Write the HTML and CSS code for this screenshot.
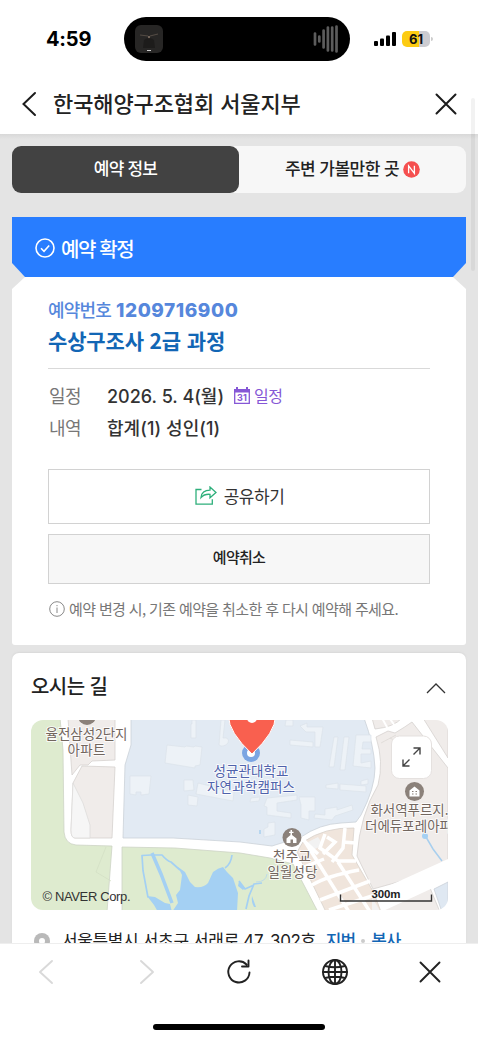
FILE: index.html
```html
<!DOCTYPE html>
<html lang="ko">
<head>
<meta charset="utf-8">
<meta name="viewport" content="width=device-width, initial-scale=1">
<title>예약 정보</title>
<link rel="stylesheet" href="styles.css">
</head>
<body>
<div class="phone">
  <div class="status">
    <span class="clock">4:59</span>
    <div class="island">
      <svg class="art" viewBox="0 0 28 28"><rect width="28" height="28" rx="6" fill="#272625"/><path d="M5 10l8 1M15 11l8-2" stroke="#534b44" stroke-width="1.2"/><path d="M14 11v4" stroke="#8c7a6b" stroke-width="1.5"/><path d="M9 15q5-4 10 0l1 8H8z" fill="#1d1c1b"/><path d="M12 25.500h4" stroke="#ccc" stroke-width="1"/></svg>
      <svg class="wave" viewBox="0 0 26 28"><path d="M2 8.500v11M6.300 11.500v5M10.600 5.500v17M14.900 2.500v23M19.200 2.500v23M23.500 1.500v25" stroke="#5c5c5c" stroke-width="2.700" stroke-linecap="round"/></svg>
    </div>
    <div class="signals">
      <svg class="cell" viewBox="0 0 22 14"><rect x="0" y="9" width="4" height="5" rx="1"/><rect x="6" y="6.500" width="4" height="7.500" rx="1"/><rect x="12" y="3.500" width="4" height="10.500" rx="1"/><rect x="18" y="0" width="4" height="14" rx="1"/></svg>
      <div class="battery">61</div><i class="battery-tip"></i>
    </div>
  </div>

  <header class="header">
    <svg class="back" viewBox="0 0 16 26"><path d="M14 2L2.500 13 14 24"/></svg>
    <h1 class="title">한국해양구조협회 서울지부</h1>
    <svg class="close" viewBox="0 0 22 22"><path d="M1.500 1.500l19 19M20.500 1.500l-19 19"/></svg>
  </header>

  <main class="content">
    <nav class="tabs">
      <div class="tab tab-on">예약 정보</div>
      <div class="tab"><span>주변 가볼만한 곳</span><svg class="new" viewBox="0 0 17 17"><circle cx="8.500" cy="8.500" r="8.300" fill="#f54f4f"/><path d="M5.600 12.300V4.800l5.800 7.500V4.800" fill="none" stroke="#fff" stroke-width="1.300"/></svg></div>
    </nav>

    <section class="banner">
      <svg class="check" viewBox="0 0 20 20"><circle cx="10" cy="10" r="9"/><path d="M6 10.300l3 3 5.200-5.800"/></svg>
      <span>예약 확정</span>
    </section>

    <section class="booking">
      <p class="number"><span>예약번호</span><b>1209716900</b></p>
      <h2 class="course">수상구조사 2급 과정</h2>
      <dl class="facts">
        <dt>일정</dt>
        <dd><span class="date">2026. 5. 4(월)</span><a class="calendar"><svg viewBox="0 0 16 17"><path d="M.7 3.500h14.600v12.800H.7z" fill="none" stroke="#8557d6" stroke-width="1.300"/><path d="M0 2h2V0h2v2h8V0h2v2h2v3.500H0z" fill="#8557d6"/><text x="3" y="13.600" textLength="10">31</text></svg>일정</a></dd>
        <dt>내역</dt>
        <dd><span class="people">합계(1) 성인(1)</span></dd>
      </dl>
      <div class="button share"><svg viewBox="0 0 22 19"><path d="M6.500 3.500H1v14.700h16.300v-5"/><path d="M6 11.500C6.500 6.500 10 4.200 15 4.200V1l6 5.500-6 5.300V8.300c-4-.3-6.700.6-9 3.200z"/></svg><span>공유하기</span></div>
      <div class="button cancel"><span>예약취소</span></div>
      <p class="notice"><svg viewBox="0 0 16 16"><circle cx="8" cy="8" r="7.300"/><path d="M8 6.500v5.500M8 4v1.200"/></svg><span>예약 변경 시, 기존 예약을 취소한 후 다시 예약해 주세요.</span></p>
    </section>

    <section class="directions">
      <div class="directions-head"><h2>오시는 길</h2><svg viewBox="0 0 20 12"><path d="M1 11l9-9 9 9"/></svg></div>
      <div class="map">
        <svg class="map-canvas" viewBox="31 720 417 190">
          <rect x="31" y="720" width="417" height="190" fill="#fff"/>
          <!-- parks -->
          <g fill="#deebcf" stroke="#cdd3c5" stroke-width=".8">
            <path d="M30 718H60L63 750 64 832Q65 844 76 845L112 846 107 912H30z"/>
            <path d="M122 847L175 848 240 853 270 858 293 864 318 912H122z"/>
          </g>
          <path d="M106 847l-10 25 15 9" fill="none" stroke="#d3e0c5" stroke-width=".8"/>
          <!-- housing blocks -->
          <g fill="#f0ecea" stroke="#d6d2cf" stroke-width=".8">
            <path d="M68 718H115V760L92 761 88 765H80L72 775z"/>
            <path d="M73 783L82 766 115 767 112 838H75Q71 838 71 830z"/>
            <path d="M376 737L388 731 395 733Q405 727 412 722L448 768V868L373 889 357 856Q360 815 378 785 384 762 376 737z"/>
            <path d="M372 718h30q-8 9-27 11zM423 718h25v40z"/>
            <path d="M378 912L430 888 440 912z"/>
          </g>
          <path d="M73 783l10 20 7 22v13H75q-4 0-4-8z" fill="#f6f6f6" stroke="#dddcda" stroke-width=".8"/>
          <path d="M373 893L450 858V880L381 912z" fill="#fff"/>
          <path d="M434 889l14-7v30h-6z" fill="#dfe8f2" stroke="#cbd1d8" stroke-width=".8"/>
          <!-- campus -->
          <path d="M131 715V745L125 765 123 838 173 838 240 842 272 846 301 837Q320 824 341 823L356 822 361 815Q375 788 375 768 374 745 364 718z" fill="#e2eaf3" stroke="#ccd2d8" stroke-width=".8"/>
          <g fill="#edf2f7" stroke="#dbe2e9" stroke-width=".7">
            <path d="M167 745l18 2 1-1 8 1 1-1 7 1-2 18-5 1v2l-30-5zM130 776h21l-2 18-8 1v-3h-5v3l-6-1zM192 720h4v18h-5v-14h1zM221 720h4l-2 18q7-1 5 5-5 5-9 2zM184 780h9l1 10-10 1zM198 783l36 9-1 9-37-7zM188 795l10 2-1 9-9-1z"/>
            <path d="M286 720h7v6h-8zM300 726l7-3v4h16l-3 20h-5v-15h-9zM290 740l23 2v5l-23-2zM334 737h4l-4 30h-5zM344 737h5l-4 33h-5zM356 735h15v7h-8l-1 7h9v5h-10v9l10-2v7l-18-2zM326 785l12-2v6l-12-1zM340 784l26 2v6l-26-2zM361 781l7-2v5l-7 1z"/>
            <path d="M267 798l30-3v5l-20 3v8l14 2v5l-24-3v-8l-3-1zM299 797h16v14h-6v9l-8-2v-13zM325 809l12-2v3l15-5 1 5-18 6-3 4-18-2 1-4 10 1zM251 798l9-1-1 4-9 1zM268 823l7-1v13l-11 2v-8l4-2z"/>
          </g>
          <!-- house blocks -->
          <path d="M303 842Q325 827 354 828L352 855 374 893 381 912H326L297 852z" fill="#f0e5dc" stroke="#d8d2cc" stroke-width=".8"/>
          <path d="M308 842l10-5 5 8-10 5zM372 897l8 14h-8z" fill="#f2f2f2"/>
          <g fill="none" stroke="#fff" stroke-width="3.500">
            <path d="M304 840l47 75M318 854l-18-17M345 828l-2 20-11 14M342 842l14 1M325 834l-5 14 18 13h18M304 867l20-8M312 885q15-9 47-15M320 900l50-19M329 910l46-15M338 862l36 56M327 837l8 5-12 12"/>
          </g>
          <path d="M396 735l-15 8M390 738q6 3 11 6" fill="none" stroke="#ddd9d6" stroke-width=".8"/>
          <path d="M382 718l6 11M388 716l7 10" fill="none" stroke="#fff" stroke-width="2"/>
          <!-- lake and streams -->
          <path d="M178 867L185 872 190 882 195 887Q204 888 208 883L213 872Q218 868 223 867L227 872 233 878 238 893 237 912H158L154 905 147 896 155 897 165 903 170 904 172 912 178 903 176 895 180 890 182 875z" fill="#a4d0f3"/>
          <path d="M151 855l-9 .500 1 15 5 27M151 855l11 0q5 6 9 7l9 8M225 868q6-4 7-13" fill="none" stroke="#a4d0f3" stroke-width="1.700" stroke-linejoin="round"/>
          <path d="M152 853l9 21 11 29" fill="none" stroke="#a4d0f3" stroke-width="3.500"/>
          <path d="M262 883l-8 1-5 12-3 13M239 881l6 8 9-4" fill="none" stroke="#a4d0f3" stroke-width="1.700"/><path d="M239 881l6 7-2 2-5-4zM252 896l4 11h-2q-3-5-2-11z" fill="#a4d0f3"/>
          <path d="M256 882q10 0 11-8" fill="none" stroke="#bddbe8" stroke-width="1"/>
          <circle cx="425" cy="836" r="3" fill="#a4d0f3"/><path d="M426 837l7 12 9 12M260 830v4" fill="none" stroke="#a8cfee" stroke-width="1.500"/>
          <!-- labels and pins -->
          <g class="label brown">
            <circle cx="87" cy="716" r="9" fill="#8b817a"/>
            <text x="45.500" y="738.500" textLength="82">율전삼성2단지</text><text x="67.500" y="754.500" textLength="38">아파트</text>
            <text x="273" y="860.500" textLength="38">천주교</text><text x="267.500" y="876.500" textLength="50">일월성당</text>
            <text x="370.500" y="815" textLength="78">화서역푸르지.</text><text x="365" y="830.500" textLength="87">더에듀포레아파</text>
          </g>
          <circle cx="251" cy="753" r="9" fill="#7ba5e2"/><circle cx="251" cy="753" r="4" fill="#fff"/>
          <path d="M228.500 716q0 16 23.500 38 23.500-22 23.500-38z" fill="#f9604f" stroke="#fff" stroke-width="1"/><circle cx="252" cy="718" r="5" fill="#fff"/>
          <g class="label blue"><text x="213.500" y="775.500" textLength="75">성균관대학교</text><text x="207" y="791.500" textLength="88">자연과학캠퍼스</text></g>
          <circle cx="292" cy="837.500" r="9.500" fill="#8b817a"/><path d="M286.500 843v-4.500l4-3.500v-2h-1.500v-1.200h1.500V830h1.500v1.800h1.500v1.200h-1.500v2l4.500 3.500v4.500h-3.500v-3.500h-2.500v3.500z" fill="#fff"/>
          <circle cx="414.500" cy="791.500" r="9.500" fill="#8b817a"/><path d="M409.500 796.500v-6l5-4 5 4v6z" fill="#fff"/><path d="M412 791.500h1.500M415.500 791.500h1.500M412 794h1.500M415.500 794h1.500" stroke="#8b817a" stroke-width="1.200"/>
          <rect x="391.500" y="736" width="40" height="42.500" rx="8" fill="#fff" stroke="#e5e1df"/>
          <path d="M413.500 754.500l6.500-6.500M413.500 748h6.500v6.500M409.500 759.500l-6.500 6.500M403 759.500v6.500h6.500" fill="none" stroke="#444" stroke-width="1.400"/>
          <text class="copyright" x="42.500" y="901" textLength="88">© NAVER Corp.</text>
          <text class="scale" x="371.500" y="897.500" textLength="29">300m</text>
          <path d="M340.500 894.500v6.500h91v-6.500" fill="none" stroke="#333" stroke-width="1.400"/>
        </svg>
      </div>
      <div class="address"><svg viewBox="0 0 16 20"><path d="M8 0a8 8 0 0 1 8 8q0 6-8 12-8-6-8-12a8 8 0 0 1 8-8z" fill="#b9b9b9"/><circle cx="8" cy="8" r="3" fill="#fff"/></svg><span class="street">서울특별시 서초구 서래로 47, 302호</span><a class="lot">지번</a><i></i><a class="copy">복사</a></div>
    </section>
  </main>

  <footer class="toolbar">
    <div class="tools">
      <svg class="tool off" viewBox="0 0 28 28"><path d="M20 3L8 14l12 11"/></svg>
      <svg class="tool off" viewBox="0 0 28 28"><path d="M8 3l12 11L8 25"/></svg>
      <svg class="tool" viewBox="0 0 28 28"><path d="M24.500 14.500A10.600 10.600 0 1 1 21.500 6.500M23.500 2.500V8.500h-6.500"/></svg>
      <svg class="tool" viewBox="0 0 28 28"><circle cx="14" cy="14" r="12"/><ellipse cx="14" cy="14" rx="6.500" ry="12"/><path d="M14 2v24M2 14h24M4 8q10 2.500 20 0M4 20q10-2.500 20 0"/></svg>
      <svg class="tool" viewBox="0 0 28 28"><path d="M4.500 4.500l19 19M23.500 4.500l-19 19"/></svg>
    </div>
    <div class="home"></div>
  </footer>
  <div class="scrollbar"></div>
</div>
</body>
</html>
```
FILE: styles.css
```css
* { box-sizing: border-box; }
body { margin: 0; font-family: "Noto Sans CJK KR", sans-serif; color: #222; }
h1, h2, p, dl, dd { margin: 0; }
svg { display: block; flex: none; }
.phone { position: relative; display: flex; flex-direction: column; width: 478px; height: 1040px; overflow: hidden; background: #fff; white-space: nowrap; }

.status { flex: none; display: flex; align-items: center; height: 77px; padding-left: 46px; }
.clock { width: 78px; font: 700 20px/24px Inter, sans-serif; letter-spacing: -.2px; color: #000; }
.island { display: flex; align-items: center; justify-content: space-between; width: 226px; height: 44px; padding: 0 11px; border-radius: 23px; background: #000; }
.art { width: 28px; height: 28px; }
.wave { width: 26px; height: 28px; }
.signals { display: flex; align-items: center; margin-left: 24px; }
.cell { width: 22px; height: 14px; }
.battery { width: 28px; height: 16px; margin-left: 6px; border-radius: 5px; background: linear-gradient(90deg, #fccb13 62%, #ccccd1 62%); font: 700 13px/16px Inter, sans-serif; text-align: center; color: #111; }
.battery-tip { width: 2px; height: 4px; margin-left: 1px; border-radius: 0 2px 2px 0; background: #ccc; }

.header { flex: none; display: flex; align-items: center; height: 57px; padding: 0 21px 4px; }
.header svg { fill: none; stroke: #1c1c1c; stroke-width: 2; stroke-linecap: round; }
.back { width: 16px; height: 26px; }
.title { flex: 1; margin: -4px 0 0 16px; font-size: 22px; line-height: 32px; font-weight: 500; letter-spacing: -.1px; }
.close { width: 22px; height: 22px; }

.content { flex: 1; min-height: 0; overflow: hidden; padding: 12px 12px 0; background: linear-gradient(#d8d8d8, #e4e4e4 5px); }
.tabs { display: flex; height: 47px; border-radius: 9px; background: #f7f7f7; }
.tab { display: flex; align-items: center; justify-content: center; flex: 1; padding-bottom: 3px; font-size: 17px; line-height: 24px; font-weight: 500; letter-spacing: -.55px; }
.tab-on { border-radius: 9px; background: #424242; color: #fff; letter-spacing: -.8px; }
.new { width: 17px; height: 17px; margin: 3px 0 0 4px; }

.banner { display: flex; align-items: center; gap: 6px; height: 60px; margin-top: 24px; padding: 2px 23px 0; background: #287dff; color: #fff; font-size: 20px; font-weight: 500; letter-spacing: -1.4px; clip-path: polygon(0 0, 100% 0, 100% 46px, calc(100% - 13px) 100%, 13px 100%, 0 46px); }
.check { width: 20px; height: 20px; fill: none; stroke: #fff; stroke-width: 1.6; }

.booking { height: 368px; padding: 20px 36px 0; border-radius: 0 0 3px 3px; background: #fff; clip-path: polygon(13px 0, calc(100% - 13px) 0, 100% 12px, 100% 100%, 0 100%, 0 12px); }
.number { display: flex; align-items: center; gap: 5px; height: 26px; color: #5687dc; font-size: 18px; font-weight: 500; letter-spacing: -.8px; }
.number span { margin-top: -2px; }
.number b { margin-top: 2px; font: 800 19px/26px Inter, sans-serif; letter-spacing: .55px; }
.course { height: 46px; padding-top: 2px; border-bottom: 1px solid #d9d9d9; font-size: 21px; line-height: 30px; font-weight: 700; letter-spacing: -.15px; color: #1266b5; }
.facts { display: grid; grid-template-columns: 59px 1fr; grid-auto-rows: 32px; align-items: center; padding-top: 10px; font-size: 18px; font-weight: 500; }
.facts dt { padding-left: 1px; font-weight: 400; letter-spacing: -.6px; color: #777; }
.facts dd { display: flex; align-items: center; font-family: Inter, "Noto Sans CJK KR", sans-serif; color: #333; }
.people { letter-spacing: .05px; }
.calendar { display: flex; align-items: center; gap: 4px; margin-left: 10px; font-size: 16px; font-weight: 400; letter-spacing: -.6px; color: #8557d6; }
.calendar svg { width: 16px; height: 17px; }
.calendar text { font: 700 9px Inter, sans-serif; letter-spacing: 0; fill: #8557d6; }
.button { display: flex; align-items: center; justify-content: center; border: 1px solid #d2d2d2; }
.share { gap: 7px; height: 55px; margin-top: 26px; padding: 0 0 2px 1px; font-size: 17px; font-weight: 400; letter-spacing: -.5px; color: #333; }
.share svg { width: 22px; height: 19px; fill: none; stroke: #2eaf7b; stroke-width: 1.3; }
.cancel { height: 50px; margin-top: 10px; padding-bottom: 5px; background: #f7f7f7; font-size: 15px; font-weight: 500; letter-spacing: -.7px; }
.notice { display: flex; align-items: center; gap: 4px; height: 50px; padding-left: 1px; font-size: 15px; letter-spacing: -.63px; color: #777; }
.notice span { margin-top: -2px; }
.notice svg { width: 16px; height: 16px; fill: none; stroke: #888; stroke-width: 1; }

.directions { height: 310px; margin-top: 8px; padding: 0 19px; border-radius: 7px 7px 0 0; background: #fff; box-shadow: 0 -1px 2px #d8d8d8; }
.directions-head { display: flex; align-items: center; justify-content: space-between; height: 67px; }
.directions-head h2 { margin-top: -2px; font-size: 20px; line-height: 28px; font-weight: 500; letter-spacing: -.55px; }
.directions-head svg { width: 20px; height: 12px; margin: 2px 1px 0 0; fill: none; stroke: #333; stroke-width: 1.3; }
.map { width: 417px; height: 190px; overflow: hidden; border-radius: 12px; }
.map-canvas { width: 417px; height: 190px; }
.label text { font-size: 13.5px; font-weight: 400; paint-order: stroke; stroke: rgba(255, 255, 255, .8); stroke-width: 2px; stroke-linejoin: round; }
.brown text { fill: #72665e; }
.blue text { fill: #4f62ab; }
.copyright { font: 13px "Liberation Sans", Arial, sans-serif; fill: #333; }
.scale { font: 700 11.5px "Liberation Sans", Arial, sans-serif; fill: #222; }
.address { display: flex; align-items: center; height: 28px; margin-top: 15px; padding-left: 3px; font-size: 17px; }
.address svg { width: 16px; height: 20px; margin-top: 7px; }
.street { margin-left: 12px; letter-spacing: -.36px; font-family: Inter, "Noto Sans CJK KR", sans-serif; }
.lot, .copy { color: #1266b5; font-weight: 500; letter-spacing: -1px; }
.lot { margin-left: 10px; }
.address i { width: 4px; height: 4px; margin: 3px 6px 0; border-radius: 50%; background: #ccc; }

.toolbar { flex: none; display: flex; flex-direction: column; align-items: center; height: 97px; border-top: 1px solid #eee; background: #fff; }
.tools { display: grid; grid-template-columns: 101px 92px 96px 95px 28px; width: 412px; padding-top: 14px; margin-right: 7px; margin-left: 5px; }
.tool { width: 28px; height: 28px; fill: none; stroke: #222; stroke-width: 1.9; stroke-linecap: round; stroke-linejoin: round; }
.off { stroke: #d9d9d9; }
.home { width: 172px; height: 6px; margin-top: 38px; border-radius: 3px; background: #000; }
.scrollbar { position: absolute; top: 98px; left: 471px; width: 4px; height: 173px; border-radius: 2px; background: rgba(0,0,0,.05); }
```
